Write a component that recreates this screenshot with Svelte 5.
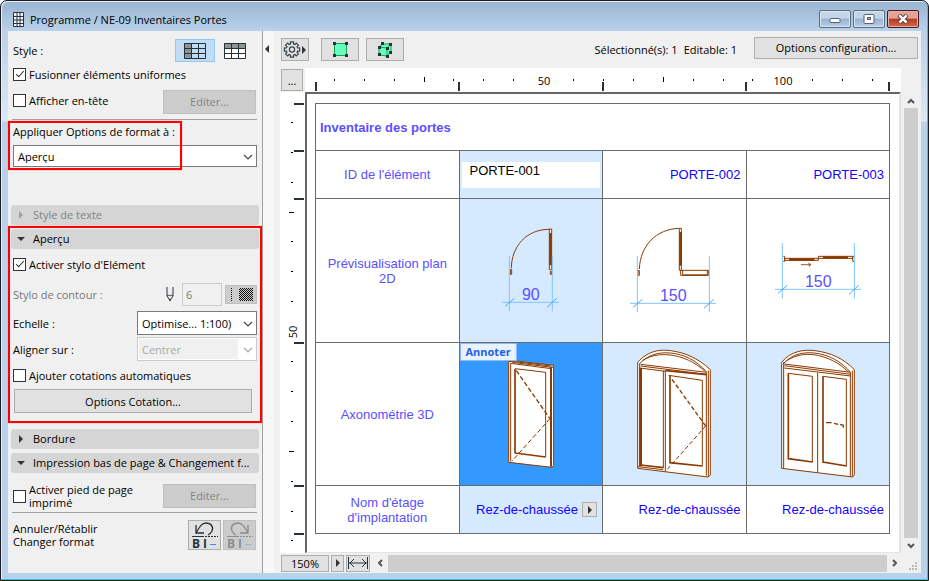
<script lang="ts">
    let mergeUniform = $state(true);
    let showHeader = $state(false);
    let elementPen = $state(true);
    let autoDimensions = $state(false);
    let pageFooter = $state(false);
    let doorId = $state("PORTE-001");

    // ruler marks, measured from the left / top edge of the schedule
    const sheetWidth = 575;
    const columnMarks = [1, 144, 288, 431, 574];
    const rowMarks = [12, 59, 107, 251, 394, 442];
    const minorX = [19, 49, 79, 138, 168, 198, 258, 288, 318, 378, 408, 437, 497, 527, 557];
    const midX = [109, 348];
    const labelsX = [
        { at: 229, text: "50" },
        { at: 468, text: "100" },
    ];
    const minorY = [30, 60, 90, 149, 179, 209, 269, 299, 329, 389, 419, 448];
    const midY = [120, 359];

    function pct(x: number): string {
        return (x / sheetWidth) * 100 + "%";
    }

    function gearPath(teeth: number, cx: number, cy: number): string {
        let d = "";
        for (let i = 0; i < teeth; i++) {
            const a = (i / teeth) * Math.PI * 2;
            const steps = [
                [-0.26, 5.8],
                [-0.2, 7.8],
                [0.2, 7.8],
                [0.26, 5.8],
            ];
            for (const [da, r] of steps) {
                d += (d ? "L" : "M") + (cx + Math.cos(a + da) * r) + " " + (cy + Math.sin(a + da) * r);
            }
        }
        return d + "Z";
    }
</script>

{#snippet chevron()}
    <svg class="chevron" width="10" height="6" viewBox="0 0 10 6">
        <path d="M1 1L5 5L9 1" fill="none" stroke="currentColor" stroke-width="1.2" />
    </svg>
{/snippet}

{#snippet tableIcon(side: boolean)}
    <svg width="22" height="16" viewBox="0 0 22 16">
        <rect x="0.5" y="0.5" width="21" height="15" fill={side ? "none" : "#fff"} />
        <path d={side ? "M0 0H7V16H0Z" : "M0 0H22V5H0Z"} fill="#8e9496" />
        <path d="M0.5 0.5H21.5V15.5H0.5ZM0 5.5H22M0 10.5H22M7.5 0V16M14.5 0V16" fill="none" stroke="#263238" />
    </svg>
{/snippet}

{#snippet dimension(x1: number, x2: number, y: number, top: number, text: string)}
    <path
        d="M{x1} {top}V{y + 27}M{x2} {top}V{y + 27}M{x1 - 22} {y}H{x2 + 20}"
        fill="none"
        stroke="#7fc4ff"
        stroke-width="3"
    />
    <path
        d="M{x1 - 13} {y + 12}L{x1 + 15} {y - 12}M{x2 - 16} {y + 15}L{x2 + 13} {y - 12}"
        fill="none"
        stroke="#4aa6f5"
        stroke-width="3"
    />
    <text x={(x1 + x2) / 2} y={y - 7} font-size="48" text-anchor="middle" fill="#5a50ff" stroke="none">{text}</text>
{/snippet}

<div class="window">
    <header class="titlebar">
        <svg width="11" height="15" viewBox="0 0 11 15">
            <path d="M0.5 0.5H10.5V14.5H0.5Z" fill="#f4f7fa" />
            <path d="M0.5 0.5H10.5V14.5H0.5ZM4 0V15M7 0V15M0 4.5H11M0 8H11M0 11.5H11" fill="none" stroke="#263238" />
        </svg>
        <h1>Programme / NE-09 Inventaires Portes</h1>
        <div class="window-buttons">
            <button aria-label="Réduire">
                <svg width="12" height="10" viewBox="0 0 12 10">
                    <rect x="1" y="4.5" width="10" height="4" rx="1" fill="#fff" stroke="#566273" />
                </svg>
            </button>
            <button aria-label="Agrandir">
                <svg width="12" height="10" viewBox="0 0 12 10">
                    <rect x="1" y="0.5" width="10" height="9" rx="1" fill="#fff" stroke="#566273" />
                    <rect x="4.5" y="3.5" width="3" height="2" fill="#9fb4cf" stroke="#566273" />
                </svg>
            </button>
            <button class="close" aria-label="Fermer">
                <svg width="12" height="10" viewBox="0 0 12 10">
                    <path d="M2 1L10 9M10 1L2 9" stroke="#54423f" stroke-width="4.4" />
                    <path d="M2.4 1.4L9.6 8.6M9.6 1.4L2.4 8.6" stroke="#fff" stroke-width="2.4" />
                </svg>
            </button>
        </div>
    </header>

    <div class="body">
        <aside>
            <div class="row style-row">
                <span>Style :</span>
                <div class="style-buttons">
                    <button class="selected" aria-label="En-têtes à gauche">{@render tableIcon(true)}</button>
                    <button aria-label="En-têtes en haut">{@render tableIcon(false)}</button>
                </div>
            </div>
            <label class="row merge"><input type="checkbox" bind:checked={mergeUniform} />Fusionner éléments uniformes</label>
            <div class="row header-row">
                <label><input type="checkbox" bind:checked={showHeader} />Afficher en-tête</label>
                <button class="btn edit" disabled>Editer...</button>
            </div>
            <hr />

            <div class="apply highlight">
                <label for="apply">Appliquer Options de format à :</label>
                <div class="select">
                    <select id="apply">
                        <option>Aperçu</option>
                    </select>
                    {@render chevron()}
                </div>
            </div>

            <button class="bar first" disabled><i class="right"></i>Style de texte</button>

            <section class="highlight">
                <button class="bar"><i class="down"></i>Aperçu</button>
                <label class="row pen-row"><input type="checkbox" bind:checked={elementPen} />Activer stylo d'Elément</label>
                <div class="row contour">
                    <label class="muted" for="pen">Stylo de contour :</label>
                    <div class="pen">
                        <svg width="8" height="15" viewBox="0 0 8 15">
                            <path d="M1 0V9L4 13.5L7 9V0M1 9C2 8 3 8 4 9C5 8 6 8 7 9" fill="none" stroke="#263238" />
                            <path d="M2.8 12L4 14.5L5.2 12Z" fill="#263238" />
                        </svg>
                        <input id="pen" type="text" value="6" disabled />
                        <button class="pattern" aria-label="Motif" disabled>
                            <svg width="23" height="13" viewBox="0 0 23 13" shape-rendering="crispEdges">
                                <defs>
                                    <pattern id="dots" width="2" height="2" patternUnits="userSpaceOnUse">
                                        <path d="M0 0H1V1H0ZM1 1H2V2H1Z" fill="#111" />
                                    </pattern>
                                </defs>
                                <path d="M1.5 0V13" stroke="#111" stroke-dasharray="1 1" />
                                <rect x="9" width="14" height="13" fill="url(#dots)" />
                            </svg>
                        </button>
                    </div>
                </div>
                <div class="row scale">
                    <label for="scale">Echelle :</label>
                    <div class="select half">
                        <select id="scale">
                            <option>Optimise... 1:100)</option>
                        </select>
                        {@render chevron()}
                    </div>
                </div>
                <div class="row align">
                    <label for="align">Aligner sur :</label>
                    <div class="select half off">
                        <select id="align" disabled>
                            <option>Centrer</option>
                        </select>
                        {@render chevron()}
                    </div>
                </div>
                <label class="row auto"><input type="checkbox" bind:checked={autoDimensions} />Ajouter cotations automatiques</label>
                <button class="btn dimension">Options Cotation...</button>
            </section>

            <button class="bar border-bar"><i class="right"></i>Bordure</button>
            <button class="bar"><i class="down"></i>Impression bas de page &amp; Changement f...</button>
            <div class="row footer-row">
                <label><input type="checkbox" bind:checked={pageFooter} /><span>Activer pied de page<br />imprimé</span></label>
                <button class="btn edit" disabled>Editer...</button>
            </div>
            <hr class="last" />
            <div class="row undo-row">
                <span>Annuler/Rétablir<br />Changer format</span>
                <div class="undo">
                    {#each [false, true] as redo}
                        <button class="btn" disabled={redo} aria-label={redo ? "Rétablir" : "Annuler"}>
                            <svg width="27" height="28" viewBox="0 0 27 28" fill="none" opacity={redo ? 0.4 : 1}>
                                <g transform={redo ? "translate(27 0) scale(-1 1)" : ""}>
                                    <path d="M5 4V12H13M5 12C9 5 11 2 15 2C20 2 23 6 21 10C20 12 19 13 17 14" stroke="#263238" stroke-width="1.3" />
                                </g>
                                <path d="M1 15.5H13" stroke="#263238" />
                                <path d="M14 15.5H27" stroke="#263238" stroke-dasharray="2 1" />
                                <text x="1" y="27" fill="#263238">B</text>
                                <text x="12" y="27" fill="#263238" font-style="italic">I</text>
                                <path d="M19 23.5H25" stroke="#3b8cff" />
                            </svg>
                        </button>
                    {/each}
                </div>
            </div>
        </aside>
        <button class="collapse" aria-label="Masquer le panneau"><i class="left"></i></button>

        <main>
            <div class="toolbar">
                <button class="btn gear" aria-label="Réglages">
                    <svg width="24" height="17" viewBox="0 0 24 17" fill="none">
                        <path d={gearPath(8, 9, 8.5)} stroke="#37444a" stroke-width="1.2" />
                        <circle cx="9" cy="8.5" r="2.6" stroke="#37444a" stroke-width="1.2" />
                        <path d="M19 5L23 9L19 13Z" fill="#333" />
                    </svg>
                </button>
                <button class="btn tool" aria-label="Sélection 2D">
                    <svg width="15" height="15" viewBox="0 0 15 15">
                        <rect x="1.5" y="1.5" width="12" height="12" fill="#66ffbf" stroke="#12a050" />
                        <path d="M0 0H3V3H0ZM12 0H15V3H12ZM0 12H3V15H0ZM12 12H15V15H12Z" fill="#263238" />
                    </svg>
                </button>
                <button class="btn tool" aria-label="Sélection 3D">
                    <svg width="16" height="16" viewBox="0 0 16 16">
                        <path d="M2 5L6 2L14 2V10L10 14L2 13Z" fill="#66ffbf" stroke="#12a050" />
                        <path d="M2 5L10 6L14 2M10 6V14" fill="none" stroke="#12a050" />
                        <path d="M4 0H7V3H4ZM12 1H15V4H12ZM1 4H4V7H1ZM9 5H12V8H9ZM12 9H15V12H12ZM1 11H4V14H1ZM9 13H12V16H9Z" fill="#263238" />
                    </svg>
                </button>
                <p class="status"><span>Sélectionné(s): 1</span><span>Editable: 1</span></p>
                <button class="btn config">Options configuration...</button>
            </div>

            <div class="view">
                <div class="sheet">
                    <button class="btn corner" aria-label="Unités">...</button>
                    <div class="ruler-x">
                        <svg width="100%" height="24" shape-rendering="crispEdges">
                            {#each columnMarks as x}
                                <line x1={pct(x)} x2={pct(x)} y1="14" y2="23" stroke="#263238" stroke-width="2" />
                            {/each}
                            {#each minorX as x}
                                <line x1={pct(x)} x2={pct(x)} y1="11" y2="13" stroke="#000" />
                            {/each}
                            {#each midX as x}
                                <line x1={pct(x)} x2={pct(x)} y1="9" y2="14" stroke="#000" />
                            {/each}
                            {#each labelsX as label}
                                <text x={pct(label.at)} y="17" text-anchor="middle">{label.text}</text>
                            {/each}
                        </svg>
                    </div>
                    <div class="ruler-y">
                        <svg width="24" height="450" shape-rendering="crispEdges">
                            {#each rowMarks as y}
                                <line x1="14" x2="24" y1={y} y2={y} stroke="#263238" stroke-width="2" />
                            {/each}
                            {#each minorY as y}
                                <line x1="11" x2="13" y1={y + 0.5} y2={y + 0.5} stroke="#000" />
                            {/each}
                            {#each midY as y}
                                <line x1="9" x2="14" y1={y + 0.5} y2={y + 0.5} stroke="#000" />
                            {/each}
                            <text transform="translate(17 240) rotate(-90)" text-anchor="middle">50</text>
                        </svg>
                    </div>
                    <div class="canvas">
                        <table>
                            <tbody>
                                <tr class="title">
                                    <th colspan="4">Inventaire des portes</th>
                                </tr>
                                <tr class="short">
                                    <th scope="row">ID de l'élément</th>
                                    <td class="active field"><input type="text" aria-label="ID de l'élément" bind:value={doorId} /></td>
                                    <td>PORTE-002</td>
                                    <td>PORTE-003</td>
                                </tr>
                                <tr class="plan">
                                    <th scope="row">Prévisualisation plan 2D</th>
                                    <td class="active drawing">
                                        <svg width="143" height="143" viewBox="27 12 429 429" fill="none" stroke="#8b3a00" stroke-width="3">
                                            <path d="M181 219C182 155 225 103 295 103" />
                                            <path d="M295 102H302V224H295ZM178 223H182V238H178ZM298 229H302V238H298Z" fill="#fff" />
                                            <path d="M298.5 114V211" stroke-width="8" />
                                            {@render dimension(175, 304, 322, 183, "90")}
                                        </svg>
                                    </td>
                                    <td class="drawing">
                                        <svg width="143" height="143" viewBox="9 12 429 429" fill="none" stroke="#8b3a00" stroke-width="3">
                                            <path d="M118 222C121 152 168 102 238 100" />
                                            <path d="M238 100H244V226H238ZM114 226H118V241H114ZM242 226H326V241H242ZM248 226V238M322 226V238" fill="#fff" />
                                            <path d="M241.5 111V212" stroke-width="8" />
                                            <path d="M247 240H323" stroke-width="4" />
                                            {@render dimension(112, 328, 325, 183, "150")}
                                        </svg>
                                    </td>
                                    <td class="drawing">
                                        <svg width="143" height="143" viewBox="438 12 429 429" fill="none" stroke="#8b3a00" stroke-width="3">
                                            <path d="M547 184H551V199H547M551 190H652V196H551ZM652 184H755V190H652ZM760 184H755V199H760" />
                                            <path d="M564 193.5H640M666 187.5H741" stroke-width="8" />
                                            <path d="M600 209H628M622 204L630 209L625 210V215" stroke-width="2.5" />
                                            {@render dimension(544, 760, 283, 144, "150")}
                                        </svg>
                                    </td>
                                </tr>
                                <tr class="axo">
                                    <th scope="row">Axonométrie 3D</th>
                                    <td class="current drawing">
                                        <span class="tag">Annoter</span>
                                        <svg width="143" height="142" viewBox="27 9 429 426" fill="none" stroke="#8b3a00" stroke-width="3">
                                            <path d="M173 65L196 63L308 76V376L302 382L173 367Z" fill="#fff" />
                                            <path d="M179 70V364M179 70L301 86L308 78M184 67L303 82M190 65L300 78" />
                                            <path d="M300 80V380" stroke-width="6" />
                                            <path d="M192 87V340M192 339L284 351" stroke-width="5" />
                                            <path d="M192 86L284 97V351" />
                                            <path d="M196 92L297 236" stroke-width="4" stroke-dasharray="14 7" />
                                            <path d="M297 236L182 364" stroke-dasharray="14 7" />
                                        </svg>
                                    </td>
                                    <td class="active drawing">
                                        <svg width="143" height="142" viewBox="9 9 429 426" fill="none" stroke="#8b3a00" stroke-width="3">
                                            <path d="M113 67C145 30 185 28 212 32C255 38 292 53 331 89V405L324 411L113 385Z" fill="#fff" />
                                            <path d="M119 71C145 44 175 36 212 39C250 43 288 59 320 96M128 61C155 45 180 42 212 45C248 50 285 66 314 93" />
                                            <path d="M119 70V380M122 73L320 97M122 78L320 103M325 92V411M119 84L196 94M190 92V384M196 90V394" />
                                            <path d="M122 84V379" stroke-width="8" />
                                            <path d="M198 92L320 104M122 375L190 383" stroke-width="5" />
                                            <path d="M319 98V407M206 106L307 121V378M113 380L190 389" />
                                            <path d="M210 106V368L307 378" stroke-width="5" />
                                            <path d="M216 118L317 258" stroke-width="4" stroke-dasharray="13 7" />
                                            <path d="M317 258L202 388" stroke-dasharray="13 7" />
                                        </svg>
                                    </td>
                                    <td class="active drawing">
                                        <svg width="143" height="142" viewBox="18 9 429 426" fill="none" stroke="#8b3a00" stroke-width="3">
                                            <path d="M122 67C150 32 190 28 222 32C268 38 308 55 340 89V404L335 411L122 385Z" fill="#fff" />
                                            <path d="M128 70C155 42 185 36 220 39C262 44 302 64 329 98M137 62C165 45 190 41 218 44C258 50 295 68 322 96" />
                                            <path d="M128 66V384M130 72L329 97M130 77L329 103M130 84L329 108M334 92V410M328 98V409M230 98V397" />
                                            <path d="M142 100L214 109V367M246 109L316 118V378" />
                                            <path d="M142 100V356L215 366M246 109V366L317 378" stroke-width="5" />
                                            <path d="M255 248H272M279 250L292 253M297 253L307 256V263" stroke-width="4" />
                                        </svg>
                                    </td>
                                </tr>
                                <tr class="short">
                                    <th scope="row">Nom d'étage d'implantation</th>
                                    <td class="active storey">
                                        <div>Rez-de-chaussée<button class="btn pick" aria-label="Choisir l'étage"><i class="right"></i></button></div>
                                    </td>
                                    <td>Rez-de-chaussée</td>
                                    <td>Rez-de-chaussée</td>
                                </tr>
                            </tbody>
                        </table>
                    </div>
                </div>
                <div class="scroll-y">
                    <button aria-label="Défiler vers le haut"><svg width="8" height="6" viewBox="0 0 8 6"><path d="M1 5L4 2L7 5" /></svg></button>
                    <div class="thumb"></div>
                    <button aria-label="Défiler vers le bas"><svg width="8" height="6" viewBox="0 0 8 6"><path d="M1 1L4 4L7 1" /></svg></button>
                </div>
            </div>

            <footer>
                <button class="btn zoom">150%</button>
                <button class="btn next" aria-label="Zoom"><i class="right"></i></button>
                <button class="btn fit" aria-label="Ajuster à la fenêtre">
                    <svg width="20" height="12" viewBox="0 0 20 12">
                        <path d="M0.5 0V12M19.5 0V12M1 6H19M6 2L2 6L6 10M14 2L18 6L14 10" fill="none" stroke="#263238" />
                    </svg>
                </button>
                <div class="scroll-x">
                    <button aria-label="Défiler à gauche"><svg width="6" height="8" viewBox="0 0 6 8"><path d="M5 1L2 4L5 7" /></svg></button>
                    <div class="thumb"></div>
                    <button aria-label="Défiler à droite"><svg width="6" height="8" viewBox="0 0 6 8"><path d="M1 1L4 4L1 7" /></svg></button>
                </div>
                <svg class="grip" width="8" height="8" viewBox="0 0 8 8">
                    <path d="M6 0H8V2H6ZM3 3H5V5H3ZM6 3H8V5H6ZM0 6H2V8H0ZM3 6H5V8H3ZM6 6H8V8H6Z" fill="#bbb" />
                </svg>
            </footer>
        </main>
    </div>
</div>

<style>
    :global(body) {
        background: #fff;
    }
    .window {
        min-height: 100vh;
        box-sizing: border-box;
        display: flex;
        flex-direction: column;
        border: 1px solid #1c1c22;
        border-radius: 7px 7px 0 0;
        padding: 1px 7px 7px;
        background: linear-gradient(#99b4d1, #b9d1ea 30px, #dce8f5 120px, #b9d1ea 121px);
        box-shadow: inset -1px -1px 0 #35c4e8, inset 1px 1px 0 #e8f1fa;
        font-family: "Open Sans", "Noto Sans", sans-serif;
        font-size: 11px;
        line-height: 13px;
        color: #000;
    }
    button,
    input,
    select {
        font: inherit;
        color: inherit;
        margin: 0;
        padding: 0;
        box-sizing: border-box;
    }
    button {
        display: flex;
        align-items: center;
        justify-content: center;
        border: none;
        background: none;
    }
    button:disabled {
        color: #838383;
    }
    .titlebar {
        display: flex;
        align-items: center;
        height: 29px;
        padding: 5px 2px 0 5px;
        box-sizing: border-box;
        gap: 6px;
    }
    h1 {
        flex: 1;
        margin: 0;
        font-size: 11px;
        font-weight: normal;
    }
    .window-buttons {
        display: flex;
        gap: 2px;
    }
    .window-buttons button {
        width: 32px;
        height: 18px;
        border: 1px solid #5b6b80;
        border-radius: 2px;
        background: linear-gradient(#c3d5e9 45%, #98b3d2 50%, #b5cde6);
        box-shadow: inset 0 0 0 1px #d9e6f3;
    }
    .window-buttons .close {
        border-color: #4a1722;
        background: linear-gradient(#e3a297 45%, #b9371f 50%, #cf6a4c);
        box-shadow: inset 0 0 0 1px #e5b1a6;
    }
    .body {
        flex: 1;
        display: flex;
        background: #f0f0f0;
    }

    /* left panel */
    aside {
        flex: 0 0 255px;
        box-sizing: border-box;
        padding: 8px 5px;
        border-right: 1px solid #a0a0a0;
    }
    .row {
        display: flex;
        align-items: center;
        justify-content: space-between;
    }
    label.row {
        justify-content: flex-start;
    }
    .row label {
        display: flex;
        align-items: center;
    }
    .style-buttons,
    .undo {
        display: flex;
    }
    .style-row {
        padding-right: 2px;
    }
    .style-buttons button {
        width: 40px;
        height: 23px;
    }
    .style-buttons .selected {
        background: #c0ddf5;
        border: 1px solid #90c8f6;
    }
    .merge {
        height: 25px;
    }
    .header-row,
    .footer-row,
    .undo-row {
        padding-right: 1px;
    }
    .header-row {
        margin-top: 3px;
        align-items: flex-start;
    }
    .header-row label {
        height: 21px;
    }
    input[type="checkbox"] {
        appearance: none;
        flex: none;
        width: 13px;
        height: 13px;
        border: 1px solid #333;
        background: #fff;
        margin-right: 3px;
        display: flex;
        justify-content: center;
    }
    input[type="checkbox"]:checked::before {
        content: "";
        width: 3px;
        height: 7px;
        border: solid #222;
        border-width: 0 1px 1px 0;
        transform: rotate(42deg);
    }
    .btn {
        border: 1px solid #adadad;
        background: #e1e1e1;
    }
    .btn:disabled {
        border-color: #bfbfbf;
        background: #ccc;
    }
    .edit {
        width: 93px;
        height: 24px;
        padding-bottom: 1px;
    }
    hr {
        height: 1px;
        margin: 5px 0 0 -1px;
        border: none;
        background: #a0a0a0;
    }
    .highlight {
        position: relative;
    }
    .highlight::after {
        content: "";
        position: absolute;
        inset: -3px -5px -10px;
        border: 2px solid #f00;
        box-shadow: 0 0 1px #f66;
        pointer-events: none;
    }
    .apply::after {
        inset: 1px 75px -3px -5px;
    }
    .apply label {
        display: block;
        line-height: 23px;
        padding-bottom: 2px;
    }
    .select {
        position: relative;
        height: 22px;
    }
    .select select {
        appearance: none;
        width: 100%;
        height: 100%;
        border: 1px solid #7a7a7a;
        border-radius: 0;
        background: #fff;
        padding: 0 24px 0 4px;
        opacity: 1;
    }
    .half {
        width: 120px;
        height: 24px;
    }
    .off {
        color: #a8a8a8;
    }
    .off select {
        border-color: #ccc;
        background: linear-gradient(#f0f0f0, #f0f0f0) 1px 1px / 99px 20px no-repeat #fff;
    }
    .select .chevron {
        position: absolute;
        right: 4px;
        top: calc(50% - 2px);
        pointer-events: none;
        color: #444;
    }
    .off .chevron {
        color: #aaa;
    }
    .bar {
        width: calc(100% + 4px);
        height: 20px;
        margin: 4px -2px 0;
        padding: 0 0 1px 8px;
        justify-content: flex-start;
        border-radius: 3px;
        background: #d5d5d5;
        white-space: nowrap;
    }
    .bar.first {
        margin-top: 38px;
        margin-bottom: 4px;
    }
    section .bar {
        margin-top: 0;
    }
    .border-bar {
        margin-top: 16px;
    }
    i {
        width: 0;
        height: 0;
        border: solid transparent;
        box-sizing: content-box;
    }
    i.right {
        border-width: 4px 0 4px 4px;
        border-left-color: #333;
    }
    i.left {
        border-width: 4px 4px 4px 0;
        border-right-color: #333;
    }
    i.down {
        border-width: 4px 4px 0;
        border-top-color: #333;
    }
    .bar i.right {
        margin-right: 10px;
    }
    .bar i.down {
        margin: 0 8px 0 -2px;
    }
    .bar:disabled i {
        border-left-color: #a0a0a0;
    }
    .pen-row {
        height: 31px;
    }
    .contour {
        height: 29px;
    }
    .muted {
        color: #777;
    }
    .pen {
        display: flex;
        align-items: center;
    }
    .pen input {
        width: 40px;
        height: 23px;
        margin: 0 3px 0 8px;
        padding: 0 3px;
        border: 1px solid #ccc;
        background: #f0f0f0;
        color: #777;
    }
    .pattern {
        width: 32px;
        height: 19px;
        border: 1px solid #bfbfbf;
        background: #ccc;
    }
    .scale {
        height: 28px;
    }
    .auto {
        height: 28px;
    }
    .dimension {
        width: calc(100% - 6px);
        height: 24px;
        margin-left: 1px;
    }
    .footer-row {
        height: 24px;
        margin-top: 11px;
    }
    .last {
        margin-top: 4px;
    }
    .undo-row {
        margin-top: 7px;
    }
    .undo {
        gap: 2px;
    }
    .undo .btn {
        width: 33px;
        height: 30px;
    }
    .undo text {
        font: bold 12px "Open Sans", sans-serif;
    }
    .collapse {
        flex: 0 0 11px;
        align-items: flex-start;
        padding: 14px 3px 0 0;
        background: #f7f7f7;
    }

    /* schedule view */
    main {
        flex: 1;
        min-width: 0;
        display: flex;
        flex-direction: column;
        padding-left: 6px;
    }
    .toolbar {
        display: flex;
        align-items: center;
        height: 37px;
        padding: 0 3px 0 1px;
    }
    .gear {
        width: 28px;
        height: 23px;
        margin-right: 12px;
    }
    .tool {
        width: 38px;
        height: 23px;
        margin-right: 7px;
    }
    .status {
        display: flex;
        gap: 6px;
        margin: 0 17px 0 auto;
    }
    .config {
        width: 164px;
        height: 22px;
        margin-bottom: 4px;
    }
    .view {
        flex: 1;
        display: flex;
    }
    .sheet {
        flex: 1;
        min-width: 0;
        display: grid;
        grid-template-columns: 25px 1fr;
        grid-template-rows: 24px 1fr;
    }
    .corner {
        width: 22px;
        height: 22px;
        margin: 1px;
    }
    .ruler-x {
        background: #fff;
        padding: 0 11px 0 10px;
    }
    .ruler-x svg,
    .ruler-y svg {
        display: block;
        overflow: visible;
    }
    .ruler-y {
        background: #fff;
    }
    .canvas {
        background: #fff;
        border: solid #666;
        border-width: 2px 2px 1px 2px;
        border-right-color: #e3e3e3;
        border-bottom-color: #e3e3e3;
        padding: 9px 9px 0 8px;
    }
    table {
        width: 100%;
        table-layout: fixed;
        border-collapse: collapse;
        font: 13px/15px "Liberation Sans", Arial, sans-serif;
        color: #1400ff;
    }
    th,
    td {
        border: 1px solid #6b6b6b;
        padding: 0 5px;
        text-align: right;
    }
    th {
        font-weight: normal;
        text-align: center;
        color: #5a50ff;
    }
    .title {
        height: 47px;
    }
    .title th {
        font-weight: bold;
        text-align: left;
        padding: 0 4px;
    }
    .short {
        height: 48px;
    }
    .plan {
        height: 144px;
    }
    .axo {
        height: 143px;
    }
    .active {
        background: #d6eaff;
    }
    .current {
        position: relative;
        background: #3399ff;
    }
    .drawing {
        padding: 0;
        text-align: center;
    }
    .drawing svg {
        display: block;
        margin: 0 auto;
    }
    .field {
        padding: 0 2px;
    }
    .field input {
        display: block;
        width: 100%;
        height: 26px;
        border: none;
        padding: 0 8px 9px;
        background: #fff;
        color: #000;
    }
    .storey div {
        display: flex;
        align-items: center;
        justify-content: flex-end;
        gap: 4px;
    }
    .pick {
        width: 15px;
        height: 15px;
    }
    .tag {
        position: absolute;
        top: 0;
        left: 0;
        padding: 0 5px 1px;
        border: 1px solid #8ab8ff;
        background: #e8f2ff;
        color: #1d5fe8;
        font: bold 11px/15px "Open Sans", sans-serif;
    }
    .scroll-y {
        flex: 0 0 20px;
        display: flex;
        flex-direction: column;
        align-items: center;
        padding-top: 25px;
    }
    .thumb {
        flex: 1;
        background: #cdcdcd;
    }
    .scroll-y .thumb {
        width: 14px;
    }
    .scroll-y button {
        width: 14px;
        height: 15px;
    }
    .scroll-y button,
    .scroll-x button {
        flex: none;
    }
    .scroll-y path,
    .scroll-x path {
        fill: none;
        stroke: #555;
        stroke-width: 2;
    }
    footer {
        display: flex;
        align-items: center;
        gap: 2px;
        height: 20px;
        padding: 0 4px 0 1px;
    }
    footer .btn {
        height: 17px;
    }
    .zoom {
        width: 48px;
    }
    .next {
        width: 13px;
    }
    .fit {
        width: 24px;
    }
    .scroll-x {
        flex: 1;
        display: flex;
        height: 17px;
    }
    .scroll-x button {
        width: 16px;
    }
    .grip {
        margin: 6px 0 0 4px;
    }
</style>
